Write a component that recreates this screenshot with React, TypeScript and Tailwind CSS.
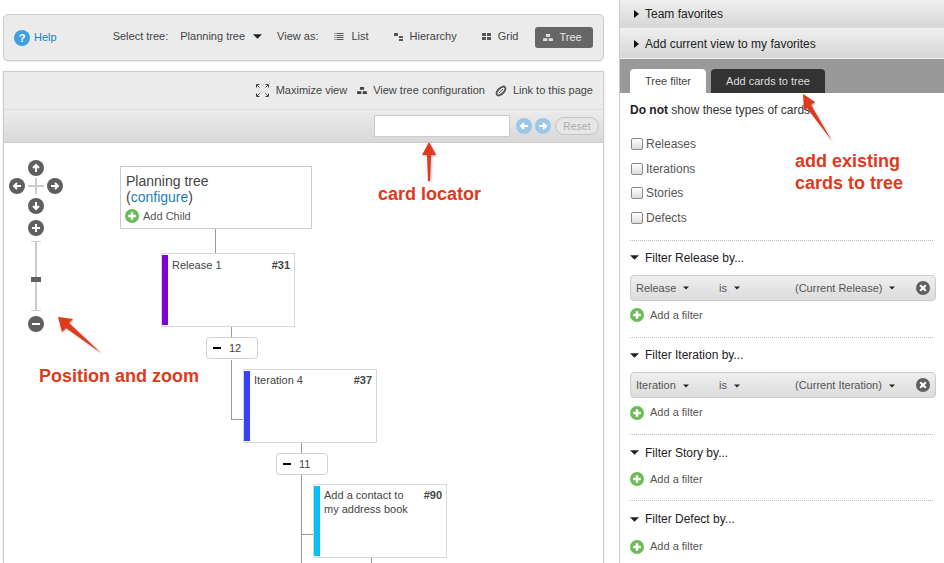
import { FC, ReactNode } from "react";

const TreeGlyph: FC<{ color: string }> = ({ color }) => (
  <svg width="10" height="7" viewBox="0 0 14 10" fill={color}>
    <rect x="4" y="0" width="6" height="4" />
    <rect x="0" y="6" width="6" height="4" />
    <rect x="8" y="6" width="6" height="4" />
  </svg>
);

const Caret: FC<{ size?: "sm" | "md" }> = ({ size = "sm" }) => (
  <svg width={size === "sm" ? 6 : 9} height={size === "sm" ? 4 : 5} viewBox="0 0 8 4" fill="#222">
    <path d="M0 0h8L4 4z" />
  </svg>
);

const RightCaret = () => (
  <svg width="5" height="8" viewBox="0 0 5 8" fill="#111">
    <path d="M0 0l5 4-5 4z" />
  </svg>
);

const PlusCircle: FC<{ size?: number }> = ({ size = 14 }) => (
  <svg width={size} height={size} viewBox="0 0 14 14">
    <circle cx="7" cy="7" r="7" fill="#6dbb56" />
    <path d="M7 3.2v7.6M3.2 7h7.6" stroke="#fff" strokeWidth="2.4" />
  </svg>
);

const NavCircle: FC<{ children: ReactNode; fill?: string }> = ({ children, fill = "#5f5f5f" }) => (
  <svg width="16" height="16" viewBox="0 0 16 16">
    <circle cx="8" cy="8" r="8" fill={fill} />
    <g stroke="#fff" strokeWidth="2" fill="none">
      {children}
    </g>
  </svg>
);

const ArrowUp = () => <path d="M8 12V6M5 8l3-3 3 3" />;
const ArrowDown = () => <path d="M8 4v6M5 8l3 3 3-3" />;
const ArrowLeft = () => <path d="M12 8H6M8 5L5 8l3 3" />;
const ArrowRight = () => <path d="M4 8h6M8 5l3 3-3 3" />;

const ViewOption: FC<{ icon: ReactNode; label: string }> = ({ icon, label }) => (
  <div className="flex items-center gap-[7px] text-[11px] text-[#444] whitespace-nowrap">
    {icon}
    <span>{label}</span>
  </div>
);

const Card: FC<{
  color: string;
  title: ReactNode;
  num: string;
  className: string;
  textClassName: string;
}> = ({ color, title, num, className, textClassName }) => (
  <div className={`absolute w-[134px] h-[74px] bg-white border border-[#d8d8d8] flex py-px ${className}`}>
    <div className="w-[6px] h-full shrink-0" style={{ backgroundColor: color }} />
    <div className={`flex-1 flex justify-between pl-1 pr-1 text-[11px] leading-[14px] text-[#444] ${textClassName}`}>
      <span className="w-[90px]">{title}</span>
      <span className="font-bold">{num}</span>
    </div>
  </div>
);

const Counter: FC<{ n: string; className: string }> = ({ n, className }) => (
  <div className={`absolute w-[52px] h-[22px] bg-white border border-[#d0d0d0] rounded-sm flex items-center gap-[8px] pl-[6px] text-[11px] text-[#444] ${className}`}>
    <div className="w-[8px] h-[2px] bg-black" />
    <span>{n}</span>
  </div>
);

const Line: FC<{ className: string }> = ({ className }) => (
  <div className={`absolute bg-[#999] ${className}`} />
);

const Checkbox: FC<{ label: string }> = ({ label }) => (
  <div className="flex items-center gap-[3px] h-[12px] text-[12px] text-[#555]">
    <div className="w-[12px] h-[12px] rounded-[2px] border border-[#888] bg-gradient-to-b from-white to-[#ddd]" />
    <span>{label}</span>
  </div>
);

const FilterRow: FC<{ field: string; value: string }> = ({ field, value }) => (
  <div className="relative h-[26px] mt-[10px] mr-[5px] rounded-[4px] border border-[#ccc] bg-gradient-to-b from-[#efefef] to-[#dcdcdc] text-[11px] text-[#555]">
    <div className="absolute left-[5px] top-[4px] flex items-center gap-[7px]">
      {field}
      <Caret />
    </div>
    <div className="absolute left-[88px] top-[4px] flex items-center gap-[7px]">
      is
      <Caret />
    </div>
    <div className="absolute left-[164px] top-[4px] flex items-center gap-[7px]">
      {value}
      <Caret />
    </div>
    <div className="absolute right-[5px] top-[5px]">
      <svg width="14" height="14" viewBox="0 0 14 14">
        <circle cx="7" cy="7" r="7" fill="#5f5f5f" />
        <path d="M4.2 4.2l5.6 5.6M9.8 4.2l-5.6 5.6" stroke="#fff" strokeWidth="2.2" />
      </svg>
    </div>
  </div>
);

const AddFilter = () => (
  <div className="flex items-center gap-[6px] mt-[6px] text-[11px] text-[#555]">
    <PlusCircle />
    <span>Add a filter</span>
  </div>
);

const FilterHeading: FC<{ label: string }> = ({ label }) => (
  <div className="flex items-center gap-[6px] text-[12px] leading-[14px] text-[#222]">
    <Caret size="md" />
    <span>{label}</span>
  </div>
);

const Accordion: FC<{ label: string; className: string }> = ({ label, className }) => (
  <div className={`flex items-center gap-[6px] pl-[14px] bg-gradient-to-b from-[#efefef] to-[#d6d6d6] border-b border-[#f4f4f4] text-[12px] text-[#222] ${className}`}>
    <RightCaret />
    <span>{label}</span>
  </div>
);

const Annotation: FC<{ className: string; children: ReactNode }> = ({ className, children }) => (
  <div className={`absolute font-bold text-[18px] leading-[22px] whitespace-nowrap text-[#e0391b] ${className}`}>{children}</div>
);

const TreeWorkspace = () => (
  <div className="relative flex-1 bg-white overflow-hidden">
    {/* pan and zoom controls */}
    <div className="absolute left-[5px] top-[17px] w-[56px] h-[190px]">
      <div className="absolute left-[19px] top-0"><NavCircle><ArrowUp /></NavCircle></div>
      <div className="absolute left-0 top-[18px]"><NavCircle><ArrowLeft /></NavCircle></div>
      <div className="absolute left-[38px] top-[18px]"><NavCircle><ArrowRight /></NavCircle></div>
      <div className="absolute left-[19px] top-[18px] w-[16px] h-[2px] mt-[7px] bg-[#ccc]" />
      <div className="absolute left-[26px] top-[18px] w-[2px] h-[16px] bg-[#ccc]" />
      <div className="absolute left-[19px] top-[38px]"><NavCircle><ArrowDown /></NavCircle></div>
      <div className="absolute left-[19px] top-[60px]">
        <NavCircle><path d="M8 4v8M4 8h8" /></NavCircle>
      </div>
      <div className="absolute left-[22px] top-[81px] w-[10px] h-px bg-[#ccc]" />
      <div className="absolute left-[26px] top-[81px] w-[2px] h-[69px] bg-[#ccc]" />
      <div className="absolute left-[22px] top-[150px] w-[10px] h-px bg-[#ccc]" />
      <div className="absolute left-[22px] top-[117px] w-[10px] h-[5px] bg-[#5f5f5f]" />
      <div className="absolute left-[19px] top-[156px]">
        <NavCircle><path d="M4 8h8" /></NavCircle>
      </div>
    </div>

    {/* root node */}
    <div className="absolute left-[116px] top-[23px] w-[192px] h-[63px] border border-[#ccc] bg-white pl-[5px] pt-[6px]">
      <div className="text-[14px] leading-[16px] text-[#444]">Planning tree</div>
      <div className="text-[14px] leading-[16px] text-[#444]">
        (<span className="text-[#1c7fb8]">configure</span>)
      </div>
      <div className="flex items-center gap-[4px] mt-[3px] -ml-[1px] text-[11px] text-[#555]">
        <PlusCircle />
        <span>Add Child</span>
      </div>
    </div>

    {/* connectors */}
    <Line className="left-[211px] top-[86px] w-px h-[25px]" />
    <Line className="left-[227px] top-[183px] w-px h-[12px]" />
    <Line className="left-[227px] top-[217px] w-px h-[60px]" />
    <Line className="left-[227px] top-[276px] w-[12px] h-px" />
    <Line className="left-[297px] top-[300px] w-px h-[10px]" />
    <Line className="left-[297px] top-[332px] w-px h-[90px]" />
    <Line className="left-[297px] top-[391px] w-[12px] h-px" />
    <Line className="left-[367px] top-[415px] w-px h-[10px]" />

    <Card color="#7e00d4" title="Release 1" num="#31" className="left-[157px] top-[110px]" textClassName="pt-[3px]" />
    <Counter n="12" className="left-[202px] top-[194px]" />
    <Card color="#3442ff" title="Iteration 4" num="#37" className="left-[239px] top-[226px]" textClassName="pt-[2px]" />
    <Counter n="11" className="left-[272px] top-[310px]" />
    <Card color="#05c0f2" title="Add a contact to my address book" num="#90" className="left-[309px] top-[341px]" textClassName="pt-[2px]" />
  </div>
);

const App = () => (
  <div className="relative w-[944px] h-[563px] overflow-hidden bg-white flex font-['Liberation_Sans',Arial,sans-serif]">
    <div className="w-[619px] shrink-0 flex flex-col pl-[3px] pr-[15px] pt-[14px]">
      {/* top toolbar */}
      <div className="h-[47px] shrink-0 rounded-[5px] border border-[#ccc] bg-[#ebebeb] flex items-center pl-[10px] shadow-[0_1px_1px_rgba(0,0,0,0.08)] whitespace-nowrap">
        <div className="flex items-center gap-[4px] text-[11px] text-[#1c7fb8]">
          <svg width="16" height="16" viewBox="0 0 16 16">
            <circle cx="8" cy="8" r="8" fill="#3f9fe0" />
            <text x="8" y="12" textAnchor="middle" fontSize="11" fontWeight="700" fill="#fff">?</text>
          </svg>
          <span>Help</span>
        </div>
        <span className="ml-[56px] mb-[2px] text-[11px] text-[#444]">Select tree:</span>
        <span className="ml-[12px] mb-[2px] text-[11px] text-[#444]">Planning tree</span>
        <span className="ml-[8px] mb-[2px] flex"><Caret size="md" /></span>
        <span className="ml-[15px] mb-[2px] text-[11px] text-[#444]">View as:</span>
        <div className="ml-[16px] mb-[2px]">
          <ViewOption
            label="List"
            icon={
              <svg width="10" height="8" viewBox="0 0 9 8" fill="#555">
                <path d="M0 0h1v1H0zM2 0h7v1H2zM0 2h1v1H0zM2 2h7v1H2zM0 4h1v1H0zM2 4h7v1H2zM0 6h1v1H0zM2 6h7v1H2z" />
              </svg>
            }
          />
        </div>
        <div className="ml-[25px] mb-[2px]">
          <ViewOption
            label="Hierarchy"
            icon={
              <svg width="9" height="8" viewBox="0 0 9 8" fill="#555">
                <path d="M0 0h4v3H0zM5 3h4v2H5zM5 6h4v2H5z" />
              </svg>
            }
          />
        </div>
        <div className="ml-[25px] mb-[2px]">
          <ViewOption
            label="Grid"
            icon={
              <svg width="9" height="8" viewBox="0 0 9 8" fill="#555">
                <path d="M0 0h4v3H0zM5 0h4v3H5zM0 4h4v3H0zM5 4h4v3H5z" />
              </svg>
            }
          />
        </div>
        <div className="ml-[17px] mb-[1px] h-[21px] w-[58px] rounded-[3px] bg-[#666] flex items-center gap-[6px] pl-[8px] text-[11px] text-[#e6e6e6]">
          <TreeGlyph color="#e0e0e0" />
          <span>Tree</span>
        </div>
      </div>

      {/* tree panel */}
      <div className="mt-[10px] flex-1 flex flex-col border border-[#ccc] border-b-0 shadow-[0_0_3px_rgba(0,0,0,0.1)]">
        <div className="h-[38px] shrink-0 bg-[#ebebeb] border-b border-[#ddd] flex items-center justify-end gap-[10px] pr-[10px] text-[11px] text-[#444]">
          <div className="flex items-center gap-[7px]">
            <svg width="13" height="13" viewBox="0 0 13 13" fill="none" stroke="#444" strokeWidth="1">
              <path d="M.5 3.5v-3h3M9.5.5h3v3M.5 9.5v3h3M9.5 12.5h3v-3M1 1l2.500 2.500M12 1L9.500 3.500M1 12l2.500-2.500M12 12L9.500 9.500" />
            </svg>
            <span>Maximize view</span>
          </div>
          <div className="flex items-center gap-[6px]">
            <TreeGlyph color="#444" />
            <span>View tree configuration</span>
          </div>
          <div className="flex items-center gap-[6px]">
            <svg width="12" height="12" viewBox="0 0 12 12" fill="none" stroke="#555" strokeWidth="2">
              <ellipse cx="6" cy="6" rx="5.500" ry="2.800" transform="rotate(-45 6 6)" />
              <path d="M4 8l4-4" strokeWidth="1" />
            </svg>
            <span>Link to this page</span>
          </div>
        </div>
        <div className="h-[33px] shrink-0 bg-gradient-to-b from-[#ececec] to-[#d8d8d8] border-b border-[#ccc] flex items-center justify-end pr-[4px]">
          <div className="w-[136px] h-[22px] bg-white border border-[#ccc]" />
          <div className="ml-[6px] flex gap-[3px]">
            <NavCircle fill="#9cc7e6"><ArrowLeft /></NavCircle>
            <NavCircle fill="#9cc7e6"><ArrowRight /></NavCircle>
          </div>
          <div className="ml-[4px] w-[44px] h-[18px] rounded-full border border-[#c4c4c4] bg-[#e6e6e6] flex items-center justify-center text-[10px] tracking-[0.3px] text-[#aaa]">
            Reset
          </div>
        </div>
        <TreeWorkspace />
      </div>
    </div>

    {/* right sidebar */}
    <div className="flex-1 border-l border-[#ccc] flex flex-col">
      <Accordion label="Team favorites" className="h-[29px]" />
      <Accordion label="Add current view to my favorites" className="h-[30px]" />
      <div className="h-[34px] shrink-0 bg-[#999] flex items-end gap-[5px] pl-[10px]">
        <div className="w-[76px] h-[24px] rounded-t-[4px] bg-white flex items-center justify-center text-[11px] text-[#444]">
          Tree filter
        </div>
        <div className="w-[114px] h-[24px] rounded-t-[4px] bg-[#333] flex items-center justify-center text-[11px] text-[#ddd]">
          Add cards to tree
        </div>
      </div>
      <div className="flex-1 pl-[10px] pr-[3px] pt-[10px]">
        <p className="text-[12px] leading-[14px] text-[#333]">
          <span className="font-bold text-[#222]">Do not</span> show these types of cards:
        </p>
        <div className="flex flex-col gap-[12.6px] mt-[21px] pl-px">
          <Checkbox label="Releases" />
          <Checkbox label="Iterations" />
          <Checkbox label="Stories" />
          <Checkbox label="Defects" />
        </div>
        <div className="mt-[16px] mr-[8px] border-t border-dotted border-[#bbb]" />
        <div className="mt-[10px]"><FilterHeading label="Filter Release by..." /></div>
        <FilterRow field="Release" value="(Current Release)" />
        <AddFilter />
        <div className="mt-[14px] mr-[8px] border-t border-dotted border-[#bbb]" />
        <div className="mt-[10px]"><FilterHeading label="Filter Iteration by..." /></div>
        <FilterRow field="Iteration" value="(Current Iteration)" />
        <AddFilter />
        <div className="mt-[13px] mr-[8px] border-t border-dotted border-[#bbb]" />
        <div className="mt-[11px]"><FilterHeading label="Filter Story by..." /></div>
        <div className="mt-[11px]"><AddFilter /></div>
        <div className="mt-[13px] mr-[8px] border-t border-dotted border-[#bbb]" />
        <div className="mt-[11px]"><FilterHeading label="Filter Defect by..." /></div>
        <div className="mt-[12px]"><AddFilter /></div>
      </div>
    </div>

    {/* red annotations */}
    <svg className="absolute left-0 top-0 pointer-events-none drop-shadow-[1px_1px_1px_rgba(0,0,0,0.3)]" width="944" height="563" fill="#e0391b">
      <path d="M429 142l7 13h-5l-1 26h-2l-1-26h-5z" />
      <path d="M58 317l15 2-4 4 32 30-35-25-4 4z" />
      <path d="M803 94l12 8-4 3 21 36-25-33-3 2z" />
    </svg>
    <Annotation className="left-[378px] top-[183px]">card locator</Annotation>
    <Annotation className="left-[39px] top-[365px]">Position and zoom</Annotation>
    <Annotation className="left-[795px] top-[150px]">
      add existing
      <br />
      cards to tree
    </Annotation>
  </div>
);

export default App;
